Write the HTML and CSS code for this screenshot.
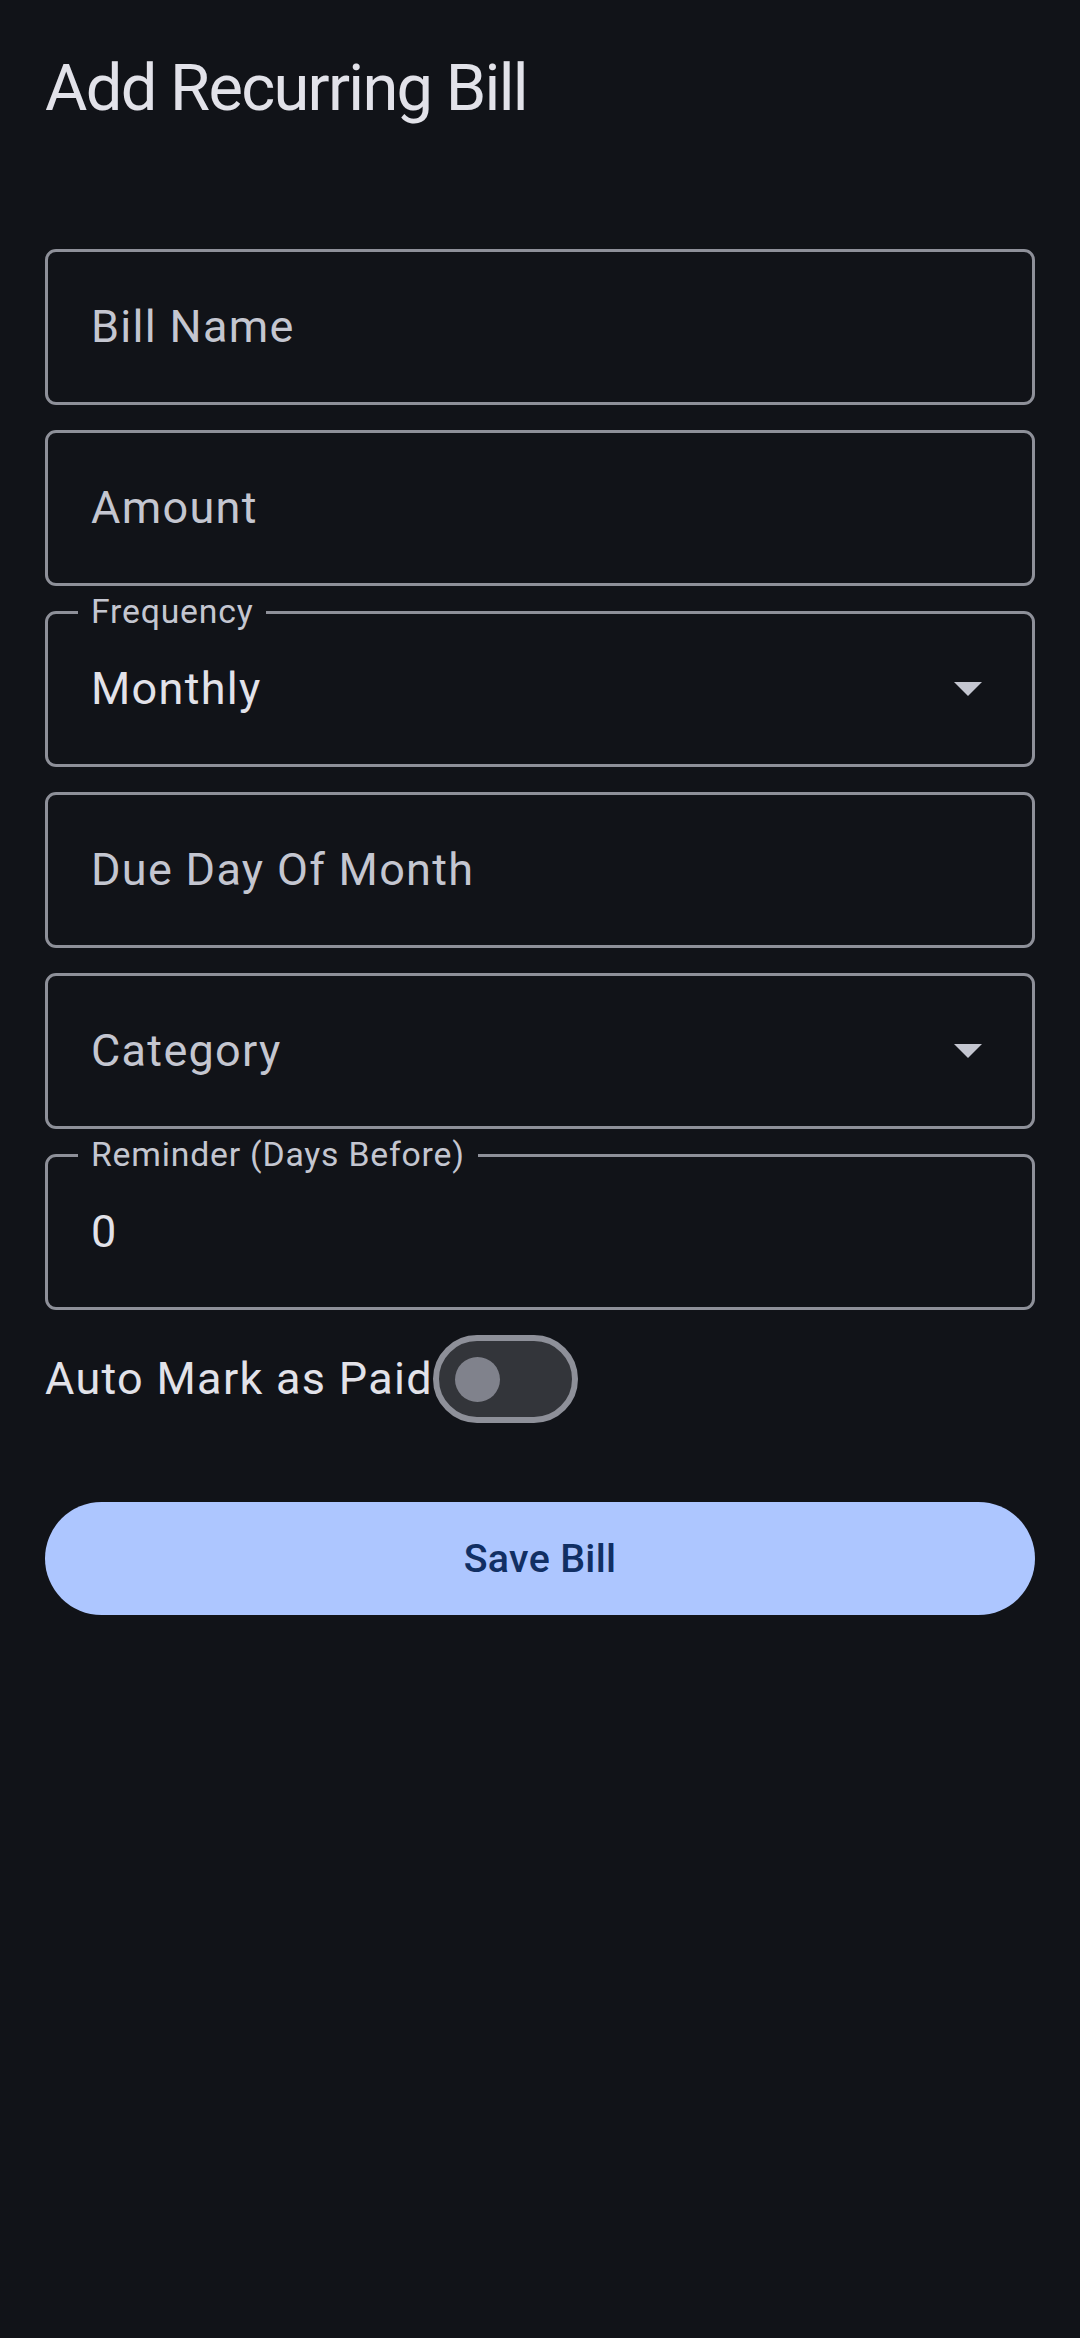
FILE: index.html
```html
<!DOCTYPE html>
<html lang="en">
<head>
<meta charset="utf-8">
<title>Add Recurring Bill</title>
<link rel="stylesheet" href="styles.css">
</head>
<body>
<main class="screen">
  <h1 class="title">Add Recurring Bill</h1>
  <form class="form">
    <div class="field"><span class="placeholder">Bill Name</span></div>
    <div class="field"><span class="placeholder">Amount</span></div>
    <div class="field field--select">
      <span class="notch-label">Frequency</span>
      <span class="value">Monthly</span>
      <svg class="arrow" width="28" height="14" viewBox="0 0 28 14"><path d="M0 0 L28 0 L14 14 Z"/></svg>
    </div>
    <div class="field"><span class="placeholder">Due Day Of Month</span></div>
    <div class="field field--select">
      <span class="placeholder">Category</span>
      <svg class="arrow" width="28" height="14" viewBox="0 0 28 14"><path d="M0 0 L28 0 L14 14 Z"/></svg>
    </div>
    <div class="field">
      <span class="notch-label">Reminder (Days Before)</span>
      <span class="value">0</span>
    </div>
    <div class="toggle-row">
      <span class="toggle-label">Auto Mark as Paid</span>
      <span class="switch"><span class="thumb"></span></span>
    </div>
    <button type="button" class="save">Save Bill</button>
  </form>
</main>
</body>
</html>
```
FILE: styles.css
```css
html, body {
  margin: 0;
  padding: 0;
  background: #111318;
}
body {
  font-family: Roboto, "Noto Sans", "Liberation Sans", sans-serif;
  color: #e2e2e9;
  min-height: 2338px;
}
.screen {
  padding: 43px 45px 0 45px;
}
.title {
  margin: 0;
  font-size: 65px;
  line-height: 90px;
  font-weight: 400;
  letter-spacing: -1.7px;
  color: #e2e2e9;
}
.form {
  margin-top: 116px;
  display: flex;
  flex-direction: column;
  gap: 25px;
}
.field {
  position: relative;
  box-sizing: border-box;
  height: 156px;
  border: 3px solid #8e9099;
  border-radius: 11px;
  padding: 0 50px 0 43px;
  display: flex;
  align-items: center;
  justify-content: space-between;
}
.placeholder, .value {
  font-size: 45px;
  line-height: 67.5px;
  letter-spacing: 1.3px;
}
.placeholder {
  color: #c4c6d0;
}
.value {
  color: #e2e2e9;
}
.notch-label {
  position: absolute;
  top: -25px;
  left: 30px;
  padding: 0 13px;
  background: #111318;
  font-size: 33.75px;
  line-height: 45px;
  letter-spacing: 0.8px;
  color: #c4c6d0;
}
.arrow {
  fill: #c4c6d0;
  flex: none;
}
.toggle-row {
  display: flex;
  align-items: center;
}
.toggle-label {
  font-size: 45px;
  line-height: 67.5px;
  letter-spacing: 1.3px;
  color: #e2e2e9;
}
.switch {
  box-sizing: border-box;
  width: 145px;
  height: 88px;
  border: 6px solid #8e9099;
  border-radius: 44px;
  background: #33353a;
  display: flex;
  align-items: center;
  padding-left: 16px;
}
.thumb {
  width: 45px;
  height: 45px;
  border-radius: 50%;
  background: #80828c;
}
.save {
  margin-top: 54px;
  height: 113px;
  border: none;
  border-radius: 57px;
  background: #adc6ff;
  color: #112f63;
  font-family: Roboto, "Noto Sans", "Liberation Sans", sans-serif;
  font-size: 39.4px;
  font-weight: 500;
  letter-spacing: 0.3px;
  padding: 0;
}
```
